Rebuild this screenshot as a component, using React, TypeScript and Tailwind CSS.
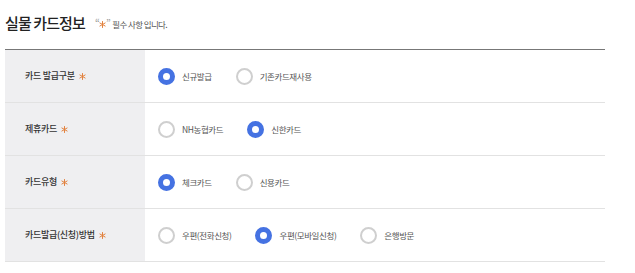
import React, { useState } from "react";

// one row of the card form
type Row = {
  label: string
  name: string
  options: string[]
  selected: number
}

const rows: Row[] = [
  { label: "카드 발급구분", name: "issueType", options: ["신규발급", "기존카드재사용"], selected: 0 },
  { label: "제휴카드", name: "partner", options: ["NH농협카드", "신한카드"], selected: 1 },
  { label: "카드유형", name: "cardType", options: ["체크카드", "신용카드"], selected: 0 },
  { label: "카드발급(신청)방법", name: "method", options: ["우편(전화신청)", "우편(모바일신청)", "은행방문"], selected: 1 },
]

const font = { fontFamily: '"Noto Sans CJK KR", "Noto Sans", sans-serif' }

// small orange star used for required fields
function Star() {
  return (
    <svg width="7" height="7" viewBox="0 0 14 14" className="shrink-0">
      <g stroke="#e2823f" strokeWidth="2" strokeLinecap="round">
        <line x1="7" y1="1" x2="7" y2="13" />
        <line x1="1.8" y1="4" x2="12.2" y2="10" />
        <line x1="1.8" y1="10" x2="12.2" y2="4" />
      </g>
    </svg>
  )
}

function Radio({ checked }: { checked: boolean }) {
  return checked ? (
    <span className="block w-[17px] h-[17px] rounded-full border-[5px] border-[#4572e2] bg-white shrink-0" />
  ) : (
    <span className="block w-[17px] h-[17px] rounded-full border-2 border-[#cfcfcf] bg-white shrink-0" />
  )
}

export default function App() {
  // keep the chosen option of each row
  const [picked, setPicked] = useState<number[]>(rows.map((r) => r.selected))

  return (
    <div className="w-[635px] h-[273px] bg-white px-[5px]" style={font}>
      {/* title */}
      <div className="h-[49px] flex items-center pb-[3px]">
        <h2 className="text-[15px] text-[#222] tracking-[-0.9px] font-medium">실물 카드정보</h2>
        <span className="ml-[10px] mt-[3px] flex items-center text-[8.5px] text-[#555] tracking-[-0.6px]">
          <span className="text-[10px] leading-none self-start text-[#999]">“</span>
          <Star />
          <span className="text-[10px] leading-none self-start text-[#999]">”</span>
          <span className="ml-[2px]">필수 사항 입니다.</span>
        </span>
      </div>

      {/* form table */}
      <div className="w-[600px] border-t border-[#777]">
        {rows.map((row, i) => (
          <div key={row.name} className="flex h-[53px] border-b border-[#e2e2e2]">
            <div className="w-[140px] bg-[#efeff1] flex items-center pl-[20px] text-[9px] font-medium text-[#333] tracking-[-0.3px]">
              {row.label}
              <span className="ml-[4px]">
                <Star />
              </span>
            </div>
            <div className="flex-1 flex items-center pl-[13px]">
              {row.options.map((opt, j) => (
                <label
                  key={opt}
                  className="flex items-center mr-[24px] cursor-pointer"
                  onClick={() => setPicked((prev) => prev.map((v, k) => (k === i ? j : v)))}
                >
                  <Radio checked={picked[i] === j} />
                  <span className="ml-[7px] text-[8.5px] text-[#555] tracking-[-0.4px]">{opt}</span>
                </label>
              ))}
            </div>
          </div>
        ))}
      </div>
    </div>
  )
}
